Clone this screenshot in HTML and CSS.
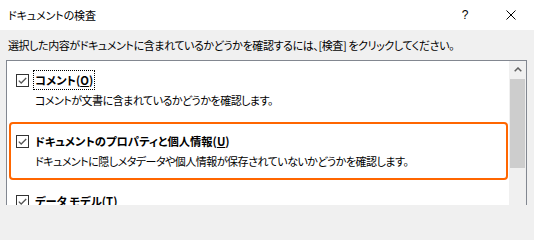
FILE: index.html
```html
<!DOCTYPE html>
<html lang="ja">
<head>
<meta charset="utf-8">
<title>ドキュメントの検査</title>
<link rel="stylesheet" href="styles.css">
</head>
<body>
<div class="dialog">
  <div class="titlebar">
    <div class="title">ドキュメントの検査</div>
    <div class="tb-btn help">?</div>
    <div class="tb-btn close">
      <svg width="10" height="10" viewBox="0 0 10 10"><path d="M0.5 0.5 L9.5 9.5 M9.5 0.5 L0.5 9.5" stroke="#000" stroke-width="1" fill="none"/></svg>
    </div>
  </div>
  <div class="content">
    <div class="instruction">選択した内容がドキュメントに含まれているかどうかを確認するには、[検査] をクリックしてください。</div>
    <div class="listbox">
      <div class="list">
        <div class="item item-first">
          <div class="item-inner">
            <div class="row">
              <svg class="cb" width="13" height="13" viewBox="0 0 13 13"><rect x="0.5" y="0.5" width="12" height="12" fill="#fff" stroke="#333"/><path d="M2.8 6.6 L5.2 9 L10.2 4" stroke="#555" stroke-width="1.3" fill="none"/></svg>
              <span class="label focus">コメント(<u>O</u>)</span>
            </div>
            <div class="desc">コメントが文書に含まれているかどうかを確認します。</div>
          </div>
        </div>
        <div class="sep"></div>
        <div class="item">
          <div class="item-inner selected">
            <div class="row">
              <svg class="cb" width="13" height="13" viewBox="0 0 13 13"><rect x="0.5" y="0.5" width="12" height="12" fill="#fff" stroke="#333"/><path d="M2.8 6.6 L5.2 9 L10.2 4" stroke="#555" stroke-width="1.3" fill="none"/></svg>
              <span class="label">ドキュメントのプロパティと個人情報(<u>U</u>)</span>
            </div>
            <div class="desc">ドキュメントに隠しメタデータや個人情報が保存されていないかどうかを確認します。</div>
          </div>
        </div>
        <div class="sep"></div>
        <div class="item item-third">
          <div class="item-inner">
            <div class="row">
              <svg class="cb" width="13" height="13" viewBox="0 0 13 13"><rect x="0.5" y="0.5" width="12" height="12" fill="#fff" stroke="#333"/><path d="M2.8 6.6 L5.2 9 L10.2 4" stroke="#555" stroke-width="1.3" fill="none"/></svg>
              <span class="label">データ モデル(<u>T</u>)</span>
            </div>
            <div class="desc">データ モデルが含まれているかどうかを確認します。</div>
          </div>
        </div>
      </div>
      <div class="scrollbar">
        <div class="sb-up">
          <svg width="8" height="5" viewBox="0 0 8 5"><path d="M0.7 4.3 L4 1 L7.3 4.3" stroke="#606060" stroke-width="1.5" fill="none"/></svg>
        </div>
        <div class="sb-thumb"></div>
      </div>
    </div>
  </div>
</div>
</body>
</html>
```
FILE: styles.css
```css
html, body {
  margin: 0;
  padding: 0;
}
body {
  width: 534px;
  height: 205px;
  overflow: hidden;
  font-family: "Noto Sans CJK JP", "Noto Sans", sans-serif;
  font-size: 11px;
  letter-spacing: -0.5px;
  color: #000;
  background: #f0f0f0;
  font-feature-settings: "palt";
}
.dialog {
  display: flex;
  flex-direction: column;
  height: 205px;
}
.titlebar {
  height: 30px;
  background: #fff;
  display: flex;
  align-items: center;
  flex-shrink: 0;
}
.title {
  padding-left: 8px;
  flex: 1;
  line-height: 16px;
  letter-spacing: -0.1px;
}
.tb-btn {
  width: 46px;
  height: 30px;
  display: flex;
  align-items: center;
  justify-content: center;
}
.help {
  font-family: "Liberation Sans", sans-serif;
  font-size: 12px;
  letter-spacing: 0;
}
.content {
  flex: 1;
  padding: 0 7px 0 6px;
  display: flex;
  flex-direction: column;
  min-height: 0;
}
.instruction {
  height: 30px;
  line-height: 30px;
  padding-left: 2px;
  white-space: nowrap;
  letter-spacing: -0.4px;
}
.listbox {
  flex: 1;
  background: #fff;
  border: 1px solid #828790;
  border-bottom: none;
  display: flex;
  min-height: 0;
  overflow: hidden;
}
.list {
  flex: 1;
  display: flex;
  flex-direction: column;
}
.item {
  padding: 2px 1px 2px 2px;
}
.item-inner {
  border: 2px solid transparent;
  border-radius: 4px;
  padding: 9px 0 9px 5px;
}
.item-first .item-inner {
  padding-top: 7px;
  padding-bottom: 8px;
}
.item-third .item-inner {
  padding-top: 7px;
}
.item-inner.selected {
  border-color: #ff6600;
}
.row {
  display: flex;
  align-items: center;
  height: 16px;
}
.cb {
  display: block;
  flex-shrink: 0;
  margin-right: 6px;
}
.label {
  font-weight: bold;
  line-height: 16px;
  white-space: nowrap;
  font-size: 11.3px;
  letter-spacing: 0;
}
.label u {
  text-underline-offset: 1px;
}
.focus {
  outline: 1px dotted #000;
  outline-offset: 1px;
}
.desc {
  margin-top: 4px;
  padding-left: 19px;
  line-height: 16px;
  white-space: nowrap;
}
.sep {
  height: 1px;
  background: #dcdcdc;
  margin: 0 0 0 2px;
}
.scrollbar {
  width: 17px;
  background: #f0f0f0;
  display: flex;
  flex-direction: column;
  flex-shrink: 0;
}
.sb-up {
  height: 17px;
  display: flex;
  align-items: center;
  justify-content: center;
}
.sb-thumb {
  margin: 1px 1px 0 1px;
  height: 89px;
  background: #cdcdcd;
}
```
